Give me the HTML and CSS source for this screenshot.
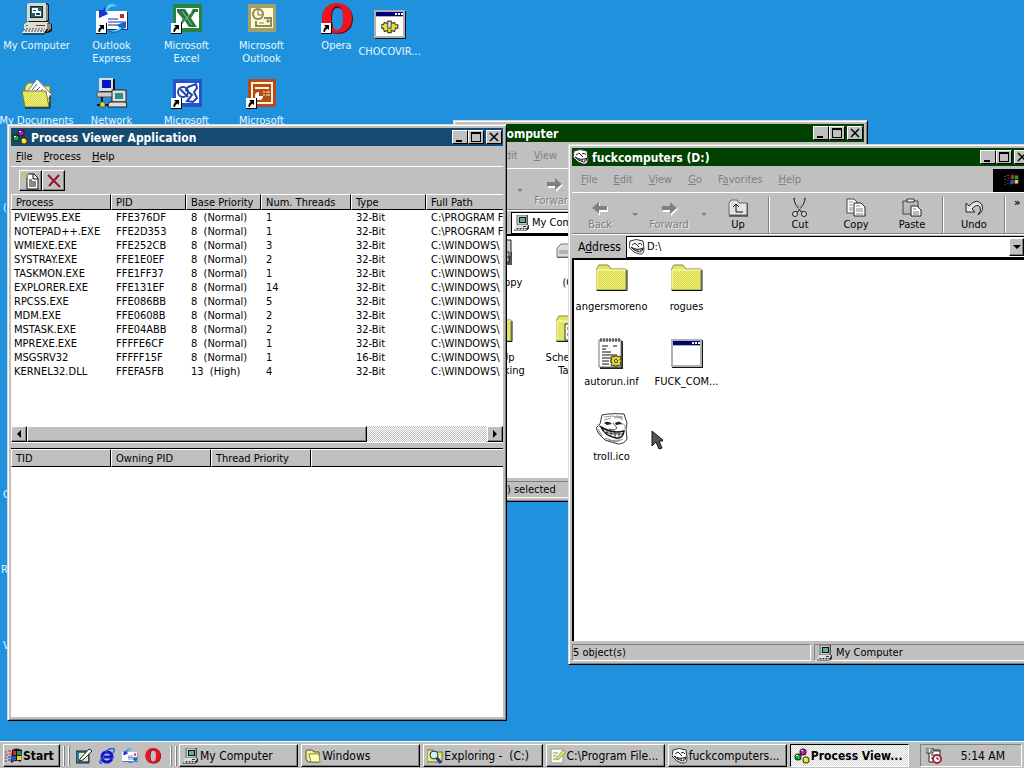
FILE: index.html
```html
<!DOCTYPE html>
<html lang="en">
<head>
<meta charset="utf-8">
<title>Desktop</title>
<link rel="stylesheet" href="styles.css">
</head>
<body>
<svg class="sprites" aria-hidden="true">
  <defs>
    <pattern id="dither-yellow" width="2" height="2" patternUnits="userSpaceOnUse"><rect width="2" height="2" fill="#d8dc48"/><path d="M0 0h1v1H0zM1 1h1v1H1z" fill="#eeee80"/></pattern>
    <symbol id="shortcut" viewBox="0 0 11 11"><path d="M0 0h11v11H0z" fill="#000"/><path d="M0 0h10v10H0z" fill="#fff"/><path d="M3 2h5v5L6.500 5.500Q4 6.500 4 9H2.500Q2 5.500 4.700 3.800z"/></symbol>
    <symbol id="pc" viewBox="0 0 32 32"><path d="M8 0h18l2 2v16l-2 2H8z" fill="#111"/><path d="M6 1l2-1h17v18H6z" fill="#dcd8cc"/><path d="M25 1l2 1v15l-2 1z" fill="#888"/><path d="M9 3h13v12H9z" fill="#222"/><path d="M10 4h11v10H10z" fill="#176a70"/><path d="M11 5h6v5h-6zM14 8h6v5h-6z" fill="#fff"/><path d="M15 10h4v2h-4zM12 7h3v1h-3z" fill="#174090"/><path d="M3 21l3-2h22l3 2v7l-4 2H3z" fill="#111"/><path d="M3 21l3-2h22l-2 2v5H3z" fill="#e0dcd0"/><path d="M26 21l4-1v6l-4 3z" fill="#888"/><path d="M15 22h9v1h-9z" fill="#444"/><path d="M5 22h2v1H5z" fill="#0a0"/><path d="M1 30l4-5h21l-3 5z" fill="#f0f0ea"/><path d="M2 31h21l4-5" fill="none" stroke="#111"/><path d="M5 26h19M4 28h19" fill="none" stroke="#333" stroke-dasharray="2 1"/></symbol>
    <symbol id="mini-pc" viewBox="0 0 16 16"><path d="M4 0h10v10H4z" fill="#333"/><path d="M3 0h10v10H3z" fill="#c8c8c8" stroke="#666"/><path d="M5 2h7v6H5z" fill="#111"/><path d="M6 3h5v4H6z" fill="#55aeb0"/><path d="M2 10h13v4H2z" fill="#333"/><path d="M2 10h12l-1 3H1z" fill="#ddd"/><path d="M9 11h3v1H9z" fill="#333"/><path d="M0 15h13l2-2" fill="none" stroke="#222"/><path d="M1 14h12" stroke="#fff" stroke-dasharray="2 1"/></symbol>
    <symbol id="outlook-express" viewBox="0 0 32 32"><path d="M1 9h31v18H1z" fill="#173060"/><path d="M0 8h31v18H0z" fill="#fff"/><path d="M24 11h4v4h-4z" fill="#d22020"/><path d="M12 16h10M12 19h16M12 22h13" stroke="#112a9a"/><path d="M20 3Q15-1 9 4L7 7H3v8l9-4-2-3q4-5 10-5z" fill="#1635d2"/><path d="M10 4q5-6 11-1l-6 1-6 5z" fill="#4ed2f2"/><path d="M11 28q8 5 15-2l4-1v-7l-9 4 3 3q-5 4-13 3z" fill="#1565c9"/><path d="M15 28q7-1 9-4l2 1q-5 5-11 3z" fill="#65e2f2"/></symbol>
    <symbol id="excel" viewBox="0 0 32 32"><path d="M2 1h29v28H2z" fill="#268440"/><path d="M5 5h23v20H5z" fill="#fff"/><path d="M6 6h8l4 6 4-6h5v3h-3l-4 6 6 9h-8l-4-6-4 4v3H6v-3h2l4-6-6-7z" fill="#267840"/><path d="M11 8l10 14M21 9L10 22" stroke="#91bf91"/></symbol>
    <symbol id="outlook" viewBox="0 0 32 32"><path d="M2 1h28v28H2z" fill="#a5a065"/><path d="M5 5h22v20H5z" fill="#fff9d5"/><circle cx="12" cy="11" r="5" fill="none" stroke="#8c8855" stroke-width="2"/><path d="M12 7v5h4" fill="none" stroke="#777247"/><path d="M10 18v5h15v-8h-7" fill="none" stroke="#8c8855" stroke-width="2"/><path d="M13 20h5M21 17h2v2h-2z" fill="#8c8855" stroke="#8c8855"/></symbol>
    <symbol id="opera" viewBox="0 0 32 32"><path d="M17 1C7 1 1 8 1 16s6 15 16 15 15-7 15-15S27 1 17 1m0 4q6 0 6 11t-6 12q-6 0-6-12t6-11" fill="#6b0713"/><path d="M16 0C6 0 1 7 1 15s5 15 15 15 15-7 15-15S26 0 16 0m0 3q6 0 6 12t-6 12q-6 0-6-12t6-12" fill="#ed1421"/></symbol>
    <symbol id="program" viewBox="0 0 32 32"><path d="M1 2h31v28H1z" fill="#111"/><path d="M0 1h31v28H0z" fill="#b0b0b0"/><path d="M2 8h27v19H2z" fill="#fff"/><path d="M2 3h27v4H2z" fill="#000078"/><path d="M21 4h2v2h-2zM24 4h2v2h-2zM27 4h2v2h-2z" fill="#fff"/></symbol>
    <symbol id="gear" viewBox="0 0 16 12"><path d="M6 1h3v2l3-1 1 2h2v3h-2l-1 3-3-1v2H6V9l-3 1-1-3H0V4h2l1-2 3 1z" fill="#e3df40" stroke="#45430b"/><path d="M6 1h3v6H6z" fill="#eee" stroke="#555"/></symbol>
    <symbol id="cog" viewBox="0 0 12 12"><path d="M5 0h2v2l3-1 1 1-1 3h2v2h-2l1 3-1 1-3-1v2H5v-2l-3 1-1-1 1-3H0V5h2L1 2l1-1 3 1z" fill="#dcdc30" stroke="#45430b"/><circle cx="6" cy="6" r="1.500" fill="#fff" stroke="#333"/></symbol>
    <symbol id="documents" viewBox="0 0 32 32"><path d="M4 9l3-4h7l2 3h13v17H4z" fill="#edec8b" stroke="#817b28"/><path d="M6 14L16 1l15 16-10 9z" fill="#fff" stroke="#777"/><path d="M11 12l5-6M13 15l6-6M16 17l6-6M20 19l5-6" stroke="#6650b0"/><path d="M1 13h24l3 16H4z" fill="url(#dither-yellow)" stroke="#7e7a2d"/><path d="M4 30h25V17" fill="none" stroke="#111"/></symbol>
    <symbol id="network" viewBox="0 0 32 32"><path d="M4 1h15v13H4z" fill="#111"/><path d="M3 0h14v13H3z" fill="#ddd"/><path d="M6 2h9v8H6z" fill="#0716c2"/><path d="M1 14h17v5H1z" fill="#ccc" stroke="#555"/><path d="M16 12h14v12H16z" fill="#ddd" stroke="#222"/><path d="M19 15h8v6h-8z" fill="#26908e"/><path d="M13 24h17l1 5H12z" fill="#ddd" stroke="#222"/><path d="M6 19v6M1 27h11" stroke="#111" stroke-width="2"/><path d="M4 24h5v5H4z" fill="#dcdc46" stroke="#555"/></symbol>
    <symbol id="frontpage" viewBox="0 0 32 32"><path d="M2 1h29v28H2z" fill="#2455cb"/><path d="M5 5h23v20H5z" fill="#fff"/><circle cx="12" cy="14" r="5" fill="#fff" stroke="#2044b0" stroke-width="2"/><path d="M9 11l8 8M17 9l8-3 1 4-3 4 3 6-4 4-6-1 5-6-6-5z" fill="none" stroke="#2044b0" stroke-width="2"/></symbol>
    <symbol id="powerpoint" viewBox="0 0 32 32"><path d="M2 1h28v28H2z" fill="#b54a20"/><path d="M6 5h20v20H6z" fill="#b54a20" stroke="#fff3c5" stroke-width="2"/><path d="M9 9h14v2H9z" fill="#fff3c5"/><path d="M13 14v4h4a4 4 0 1 1-4-4" fill="#fff"/><path d="M17 14h2M20 14h4M17 17h2M20 17h4" stroke="#fff3c5"/></symbol>
    <symbol id="folder" viewBox="0 0 32 32"><path d="M0 7l3-5h9l3 4h15v21H0z" fill="url(#dither-yellow)" stroke="#85843b"/><path d="M1 26V7h29" fill="none" stroke="#ffffc4"/><path d="M1 27.500h30V7" fill="none" stroke="#111"/></symbol>
    <symbol id="mini-folder" viewBox="0 0 16 16"><path d="M1 3l1-1h5l2 2h5v10H4L1 12z" fill="#efed95" stroke="#55532d"/><path d="M4 6h10l1 8H6z" fill="#ffffb5" stroke="#898641"/></symbol>
    <symbol id="inf" viewBox="0 0 32 32"><path d="M4 3h23v28H4z" fill="#222"/><path d="M3 2h22v27H3z" fill="#fff" stroke="#777"/><path d="M5 0v4M8 0v4M11 0v4M14 0v4M17 0v4M20 0v4M23 0v4" stroke="#111"/><path d="M6 8h6M17 8h4M6 11h4M6 14h9M6 17h15M6 20h16M6 23h7M6 26h7" stroke="#111"/></symbol>
    <symbol id="troll" viewBox="0 0 32 32"><path d="M6 2q8-2 22-1l3 9-1 6 1 10q-3 5-9 5L9 27 3 21l-3-6 4-4z" fill="#fff" stroke="#333"/><path d="M8 4l8-1 11 2M8 7l7-2M18 5q5-2 9 2M4 14l-3-3M25 11q5-1 4 5M20 3l7 1" fill="none" stroke="#999"/><path d="M8 10q4-3 8 1l-5 1zM19 10q5-3 7 1l-6 1z" fill="#222"/><path d="M17 10l4 5-3 2-5-1" fill="none" stroke="#555"/><path d="M5 14q11 7 23 4-1 8-8 7Q9 23 5 14z" fill="#fff" stroke="#111" stroke-width="1.500"/><path d="M8 19q9 3 19 2M11 17v5M15 18v6M19 19v6M23 18v6" fill="none" stroke="#333"/><path d="M9 25q7 4 15 2M20 29l7-3M2 16l4 7M12 27l8 2" fill="none" stroke="#888"/></symbol>
    <symbol id="mini-troll" viewBox="0 0 16 16"><path d="M1 2q6-3 13 0l1 8q0 6-5 5L5 13 0 8z" fill="#fff" stroke="#333"/><path d="M3 6l3-2 2 2M9 5q3-2 4 1M8 6l2 2" fill="none" stroke="#222"/><path d="M2 8q6 4 12 1-1 6-6 3-4-1-6-4z" fill="#eee" stroke="#222"/><path d="M6 10v2M9 10v3M12 10v2" stroke="#333"/></symbol>
    <symbol id="balls" viewBox="0 0 16 16"><circle cx="9" cy="4" r="3.500" fill="#241127"/><circle cx="9" cy="4" r="2.500" fill="#bf16bf"/><circle cx="4" cy="9" r="3.500" fill="#092c0b"/><circle cx="4" cy="9" r="2.500" fill="#18a92c"/><circle cx="12" cy="12" r="3.500" fill="#333008"/><circle cx="12" cy="12" r="2.500" fill="#ece629"/><path d="M7 2h2v1H7zM2 7h2v1H2zM10 10h2v1h-2z" fill="#fff"/></symbol>
    <symbol id="tasks" viewBox="0 0 32 32"><use href="#folder"/><path d="M9 10h19v16H9z" fill="#fff" stroke="#333"/><path d="M12 13h5v3h-5zM12 19h5v3h-5z" fill="none" stroke="#333"/></symbol>
    <symbol id="drive" viewBox="0 0 32 32"><path d="M1 9l4-4h23l3 3v11H1z" fill="#555"/><path d="M1 9l4-4h23l-3 4v9H1z" fill="#ddd" stroke="#777"/><path d="M3 12h19M3 14h19" stroke="#888"/></symbol>
    <symbol id="floppy" viewBox="0 0 32 32"><path d="M1 13h30v13H1z" fill="#555"/><path d="M2 13h26v10H2zM12 1h18v17H12z" fill="#ccc" stroke="#222"/><path d="M16 2h10v7H16zM4 18h18v2H4z" fill="#333"/></symbol>
    <symbol id="flag" viewBox="0 0 18 16"><path d="M7 2q4-3 10 0l-1 12q-5-3-10 1z" fill="#111"/><path d="M8 3q2-1 3 0v4H8z" fill="#df2828"/><path d="M12 3h4v4h-4z" fill="#1e9b42"/><path d="M7 9q2-2 4-1v4l-4 1z" fill="#265acb"/><path d="M12 8h4v4h-4z" fill="#e8d42b"/><path d="M0 4h2M3 3h3M0 7h3M4 6h2" stroke="#b62d2d"/><path d="M0 10h2M3 9h3M0 13h2M3 12h3" stroke="#233b9b"/></symbol>
    <symbol id="back" viewBox="0 0 20 20"><path d="M3 11l7-6v4h8v5h-8v4z" fill="#fff"/><path d="M2 10l7-6v4h8v4H9v4z" fill="#808080"/></symbol>
    <symbol id="forward" viewBox="0 0 20 20"><path d="M19 11l-7-6v4H4v5h8v4z" fill="#fff"/><path d="M18 10l-7-6v4H3v4h8v4z" fill="#808080"/></symbol>
    <symbol id="up" viewBox="0 0 20 20"><path d="M1 17V5l2-3h6l2 3h8v12z" fill="#e4e4e4" stroke="#666"/><path d="M1 18h19V5" fill="none" stroke="#111"/><path d="M5 9l3-3 3 3M8 6v8h7" fill="none" stroke="#111"/></symbol>
    <symbol id="cut" viewBox="0 0 20 20"><path d="M4 0l2 6 6 8M15 0l-2 6-6 8" fill="none" stroke="#333" stroke-width="2"/><path d="M5 1l2 6 5 6M14 1l-2 6-5 6" fill="none" stroke="#ddd"/><circle cx="5" cy="16" r="2.500" fill="#ddd" stroke="#222"/><circle cx="14" cy="16" r="2.500" fill="#ddd" stroke="#222"/></symbol>
    <symbol id="copy" viewBox="0 0 20 20"><path d="M1 1h7l3 3v11H1z" fill="#fff" stroke="#444"/><path d="M3 4h4M3 7h4M3 10h4M3 12h4" stroke="#888"/><path d="M8 5h7l4 4v9H8z" fill="#fff" stroke="#222"/><path d="M10 8h4M10 11h7M10 13h7M10 16h7" stroke="#888"/></symbol>
    <symbol id="paste" viewBox="0 0 20 20"><path d="M1 3h15v13H1z" fill="#bbb" stroke="#444"/><path d="M5 1h7v3H5z" fill="#eee" stroke="#333"/><path d="M9 8h6l4 4v6H9z" fill="#fff" stroke="#222"/><path d="M11 11h3M11 14h6M11 16h6" stroke="#777"/></symbol>
    <symbol id="undo" viewBox="0 0 20 20"><path d="M2 5v9h9l-3-3q5-6 8-2 2 3-2 8 6-4 4-10Q13-1 5 8z" fill="#e5e5e5" stroke="#222"/></symbol>
    <symbol id="write" viewBox="0 0 16 16"><path d="M0 3h13v12H0z" fill="#287e9e" stroke="#222"/><path d="M3 5h9v8H3z" fill="#eee5b0"/><path d="M4 11L13 1l3 2-9 9-4 1z" fill="#fff" stroke="#222"/></symbol>
    <symbol id="ie" viewBox="0 0 16 16"><path d="M13 11q-2 3-5 3-5 0-5-5t5-5q5 0 5 5H5" fill="none" stroke="#1515d0" stroke-width="3"/><path d="M3 10Q-1 16 3 15M6 4q6-5 9-3 1 1-1 4" fill="none" stroke="#2858e0" stroke-width="1.500"/></symbol>
    <symbol id="explore" viewBox="0 0 16 16"><path d="M0 2h6l2 2h7v10H0z" fill="#efec63" stroke="#666"/><path d="M9 9l5 6" stroke="#1537a6" stroke-width="3"/><circle cx="7" cy="7" r="4" fill="#c5f5fa" stroke="#235"/></symbol>
    <symbol id="note" viewBox="0 0 16 16"><path d="M1 1h12v14H1z" fill="#f4ffe4" stroke="#999"/><path d="M3 5h5M3 8h4M3 11h5" stroke="#75a35e"/><path d="M6 11l7-9 3 2-8 8z" fill="#e6e33b" stroke="#999"/></symbol>
    <symbol id="scheduler" viewBox="0 0 16 16"><path d="M3 2h11v12H3z" fill="#fff" stroke="#222"/><path d="M0 0h7v5H0z" fill="#fff" stroke="#222"/><path d="M2 1v3M5 1v3M5 7h4M5 10h3M8 3h6" stroke="#333"/><circle cx="11" cy="11" r="4" fill="#fff" stroke="#b71c3e" stroke-width="2"/><path d="M11 9v2h2" fill="none" stroke="#222"/></symbol>
    <symbol id="min" viewBox="0 0 10 10"><path d="M1 8h6v2H1z"/></symbol>
    <symbol id="max" viewBox="0 0 10 10"><path d="M0 0h10v10H0zM1 2v7h8V2z" fill-rule="evenodd"/></symbol>
    <symbol id="close" viewBox="0 0 10 10"><path d="M1 1l8 8M9 1L1 9" stroke="#000" stroke-width="1.500"/></symbol>
  </defs>
</svg>

<main class="desktop">
  <div class="desk-icons">
    <a class="item" href="#"><svg class="i32"><use href="#pc"/></svg><span>My Computer</span></a>
    <a class="item" href="#"><svg class="i32"><use href="#outlook-express"/><use href="#shortcut" y="20" width="11" height="11"/></svg><span>Outlook<br>Express</span></a>
    <a class="item" href="#"><svg class="i32"><use href="#excel"/><use href="#shortcut" y="20" width="11" height="11"/></svg><span>Microsoft<br>Excel</span></a>
    <a class="item" href="#"><svg class="i32"><use href="#outlook"/></svg><span>Microsoft<br>Outlook</span></a>
    <a class="item" href="#"><svg class="i32"><use href="#opera"/><use href="#shortcut" y="20" width="11" height="11"/></svg><span>Opera</span></a>
    <a class="item" href="#"><svg class="i32"><use href="#documents"/></svg><span>My Documents</span></a>
    <a class="item" href="#"><svg class="i32"><use href="#network"/></svg><span>Network</span></a>
    <a class="item" href="#"><svg class="i32"><use href="#frontpage"/><use href="#shortcut" y="20" width="11" height="11"/></svg><span>Microsoft</span></a>
    <a class="item" href="#"><svg class="i32"><use href="#powerpoint"/><use href="#shortcut" y="20" width="11" height="11"/></svg><span>Microsoft</span></a>
  </div>
  <a class="item loose" href="#"><svg class="i32"><use href="#program"/><use href="#gear" x="7" y="11" width="18" height="14"/></svg><span>CHOCOVIR...</span></a>
  <span class="peek peek-a">(</span><span class="peek peek-b">C</span><span class="peek peek-c">R</span><span class="peek peek-d">V</span>

  <section class="window computer">
    <header class="title"><svg class="i16"><use href="#mini-pc"/></svg><h2>My Computer</h2>
      <div class="controls"><button aria-label="Minimize"><svg><use href="#min"/></svg></button><button aria-label="Maximize"><svg><use href="#max"/></svg></button><button aria-label="Close"><svg><use href="#close"/></svg></button></div></header>
    <nav class="menu dim"><button><u>F</u>ile</button><button><u>E</u>dit</button><button><u>V</u>iew</button></nav>
    <div class="tools"><button class="tool dim"><svg class="i20"><use href="#back"/></svg>Back</button><i class="drop dim"></i><button class="tool dim"><svg class="i20"><use href="#forward"/></svg>Forward</button></div>
    <div class="address"><label for="addr-a">A<u>d</u>dress</label><div class="field"><svg class="i16"><use href="#mini-pc"/></svg><input id="addr-a" value="My Computer"></div></div>
    <div class="files">
      <a class="item" href="#"><svg class="i32"><use href="#floppy"/></svg><span>3½ Floppy</span></a>
      <a class="item" href="#"><svg class="i32"><use href="#drive"/></svg><span>(C:)</span></a>
      <a class="item" href="#"><svg class="i32"><use href="#folder"/></svg><span>Dial-Up<br>Networking</span></a>
      <a class="item" href="#"><svg class="i32"><use href="#tasks"/></svg><span>Scheduled<br>Tasks</span></a>
    </div>
    <footer class="status"><span>1 object(s) selected</span></footer>
  </section>

  <section class="window drive">
    <header class="title"><svg class="i16"><use href="#mini-troll"/></svg><h2>fuckcomputers (D:)</h2>
      <div class="controls"><button aria-label="Minimize"><svg><use href="#min"/></svg></button><button aria-label="Maximize"><svg><use href="#max"/></svg></button><button aria-label="Close"><svg><use href="#close"/></svg></button></div></header>
    <nav class="menu dim"><button><u>F</u>ile</button><button><u>E</u>dit</button><button><u>V</u>iew</button><button><u>G</u>o</button><button>F<u>a</u>vorites</button><button><u>H</u>elp</button><span class="brand"><svg class="i16"><use href="#flag"/></svg></span></nav>
    <div class="tools">
      <button class="tool dim"><svg class="i20"><use href="#back"/></svg>Back</button><i class="drop dim"></i>
      <button class="tool dim"><svg class="i20"><use href="#forward"/></svg>Forward</button><i class="drop dim"></i>
      <button class="tool"><svg class="i20"><use href="#up"/></svg>Up</button><i class="rule"></i>
      <button class="tool"><svg class="i20"><use href="#cut"/></svg>Cut</button>
      <button class="tool"><svg class="i20"><use href="#copy"/></svg>Copy</button>
      <button class="tool"><svg class="i20"><use href="#paste"/></svg>Paste</button><i class="rule"></i>
      <button class="tool"><svg class="i20"><use href="#undo"/></svg>Undo</button><i class="rule"></i>
      <button class="more">»</button>
    </div>
    <div class="address"><label for="addr-b">A<u>d</u>dress</label><div class="field"><svg class="i16"><use href="#mini-troll"/></svg><input id="addr-b" value="D:\"><button class="bevel" aria-label="Show addresses"><i class="tri down"></i></button></div></div>
    <div class="files">
      <a class="item" href="#"><svg class="i32"><use href="#folder"/></svg><span>angersmoreno</span></a>
      <a class="item" href="#"><svg class="i32"><use href="#folder"/></svg><span>rogues</span></a>
      <a class="item" href="#"><svg class="i32"><use href="#inf"/><use href="#cog" x="14" y="17" width="12" height="12"/></svg><span>autorun.inf</span></a>
      <a class="item" href="#"><svg class="i32"><use href="#program"/></svg><span>FUCK_COM...</span></a>
      <a class="item" href="#"><svg class="i32"><use href="#troll"/></svg><span>troll.ico</span></a>
    </div>
    <footer class="status"><span>5 object(s)</span><span><svg class="i16"><use href="#mini-pc"/></svg>My Computer</span></footer>
  </section>

  <section class="window viewer">
    <header class="title"><svg class="i16"><use href="#balls"/></svg><h1>Process Viewer Application</h1>
      <div class="controls"><button aria-label="Minimize"><svg><use href="#min"/></svg></button><button aria-label="Maximize"><svg><use href="#max"/></svg></button><button aria-label="Close"><svg><use href="#close"/></svg></button></div></header>
    <nav class="menu"><button><u>F</u>ile</button><button><u>P</u>rocess</button><button><u>H</u>elp</button></nav>
    <div class="actions">
      <button class="bevel" aria-label="New"><svg class="i18" viewBox="0 0 18 18"><path d="M5 2h7l4 4v11H5z" fill="#fff" stroke="#111"/><path d="M11 2v5h5M7 8h3M7 10h7M7 12h7M7 14h7" fill="none" stroke="#111"/><path d="M3 0v7M0 3h7M1 1l5 5M6 1L1 6" stroke="#c5c45a"/></svg></button>
      <button class="bevel" aria-label="Kill"><svg class="i18" viewBox="0 0 18 18"><path d="M3 3l12 12M14 3L4 14" fill="none" stroke="#971533" stroke-width="2"/></svg></button>
    </div>
    <div class="pane">
      <table class="grid">
        <colgroup><col class="w100"><col class="w75"><col class="w75"><col class="w90"><col class="w75"><col></colgroup>
        <thead><tr><th>Process</th><th>PID</th><th>Base Priority</th><th>Num. Threads</th><th>Type</th><th>Full Path</th></tr></thead>
        <tbody>
          <tr><td>PVIEW95.EXE</td><td>FFE376DF</td><td>8&nbsp; (Normal)</td><td>1</td><td>32-Bit</td><td>C:\PROGRAM F</td></tr>
          <tr><td>NOTEPAD++.EXE</td><td>FFE2D353</td><td>8&nbsp; (Normal)</td><td>1</td><td>32-Bit</td><td>C:\PROGRAM F</td></tr>
          <tr><td>WMIEXE.EXE</td><td>FFE252CB</td><td>8&nbsp; (Normal)</td><td>3</td><td>32-Bit</td><td>C:\WINDOWS\</td></tr>
          <tr><td>SYSTRAY.EXE</td><td>FFE1E0EF</td><td>8&nbsp; (Normal)</td><td>2</td><td>32-Bit</td><td>C:\WINDOWS\</td></tr>
          <tr><td>TASKMON.EXE</td><td>FFE1FF37</td><td>8&nbsp; (Normal)</td><td>1</td><td>32-Bit</td><td>C:\WINDOWS\</td></tr>
          <tr><td>EXPLORER.EXE</td><td>FFE131EF</td><td>8&nbsp; (Normal)</td><td>14</td><td>32-Bit</td><td>C:\WINDOWS\</td></tr>
          <tr><td>RPCSS.EXE</td><td>FFE086BB</td><td>8&nbsp; (Normal)</td><td>5</td><td>32-Bit</td><td>C:\WINDOWS\</td></tr>
          <tr><td>MDM.EXE</td><td>FFE0608B</td><td>8&nbsp; (Normal)</td><td>2</td><td>32-Bit</td><td>C:\WINDOWS\</td></tr>
          <tr><td>MSTASK.EXE</td><td>FFE04ABB</td><td>8&nbsp; (Normal)</td><td>2</td><td>32-Bit</td><td>C:\WINDOWS\</td></tr>
          <tr><td>MPREXE.EXE</td><td>FFFFE6CF</td><td>8&nbsp; (Normal)</td><td>1</td><td>32-Bit</td><td>C:\WINDOWS\</td></tr>
          <tr><td>MSGSRV32</td><td>FFFFF15F</td><td>8&nbsp; (Normal)</td><td>1</td><td>16-Bit</td><td>C:\WINDOWS\</td></tr>
          <tr><td>KERNEL32.DLL</td><td>FFEFA5FB</td><td>13&nbsp; (High)</td><td>4</td><td>32-Bit</td><td>C:\WINDOWS\</td></tr>
        </tbody>
      </table>
    </div>
    <div class="scroll"><button class="bevel" aria-label="Scroll left"><i class="tri left"></i></button><span class="thumb bevel"></span><span class="track"></span><button class="bevel" aria-label="Scroll right"><i class="tri right"></i></button></div>
    <div class="splitter"></div>
    <div class="threads">
      <table class="grid">
        <colgroup><col class="w100"><col class="w100"><col class="w100"><col></colgroup>
        <thead><tr><th>TID</th><th>Owning PID</th><th>Thread Priority</th><th></th></tr></thead>
      </table>
    </div>
  </section>

  <svg class="pointer" viewBox="0 0 12 20"><path d="M1 1v15l4-4 3 7 3-1-3-7h5z" fill="#555" stroke="#111"/></svg>
</main>

<footer class="taskbar">
  <button class="start bevel"><svg class="i18"><use href="#flag"/></svg>Start</button>
  <i class="grip"></i>
  <div class="quick">
    <a href="#" aria-label="Show Desktop"><svg class="i16"><use href="#write"/></svg></a>
    <a href="#" aria-label="Internet Explorer"><svg class="i16"><use href="#ie"/></svg></a>
    <a href="#" aria-label="Outlook Express"><svg class="i16"><use href="#outlook-express"/></svg></a>
    <a href="#" aria-label="Opera"><svg class="i16"><use href="#opera"/></svg></a>
  </div>
  <i class="grip"></i>
  <div class="tasks">
    <button class="bevel"><svg class="i16"><use href="#mini-pc"/></svg>My Computer</button>
    <button class="bevel"><svg class="i16"><use href="#mini-folder"/></svg>Windows</button>
    <button class="bevel"><svg class="i16"><use href="#explore"/></svg>Exploring -&nbsp; (C:)</button>
    <button class="bevel"><svg class="i16"><use href="#note"/></svg>C:\Program File...</button>
    <button class="bevel"><svg class="i16"><use href="#mini-troll"/></svg>fuckcomputers...</button>
    <button class="active"><svg class="i16"><use href="#balls"/></svg>Process View...</button>
  </div>
  <div class="tray"><svg class="i16"><use href="#scheduler"/></svg><time>5:14 AM</time></div>
</footer>
</body>
</html>
```
FILE: styles.css
```css
:root {
  --face: #c0c0c0;
  --shade: #808080;
  --sky: #2092dd;
}
* { box-sizing: border-box; }
body {
  margin: 0;
  height: 100vh;
  display: flex;
  flex-direction: column;
  overflow: hidden;
  background: var(--sky);
  color: #000;
  font: 11px/14px "DejaVu Sans Condensed", "Noto Sans", sans-serif;
}
button, input { font: inherit; color: inherit; }
button { margin: 0; padding: 0; border: 0; background: none; white-space: nowrap; }
a { color: inherit; text-decoration: none; }
svg { display: block; flex: none; }
.sprites { position: absolute; width: 0; height: 0; }
.i16 { width: 16px; height: 16px; }
.i18 { width: 18px; height: 18px; }
.i20 { width: 20px; height: 20px; }
.i32 { width: 32px; height: 32px; }

.bevel {
  background: var(--face);
  border: 1px solid;
  border-color: #fff #000 #000 #fff;
  box-shadow: inset -1px -1px var(--shade);
}
.tri { display: block; width: 0; height: 0; border: 4px solid transparent; }
.tri.left { border-left: 0; border-right-color: #000; }
.tri.right { border-right: 0; border-left-color: #000; }
.tri.down { border-bottom: 0; border-top-color: #000; }

.desktop { position: relative; flex: 1; min-height: 0; overflow: hidden; }
.desk-icons {
  display: grid;
  grid-template-columns: repeat(5, 75px);
  grid-auto-rows: 75px;
  margin-left: -1px;
  padding-top: 3px;
  color: #e4f8ff;
}
.item {
  display: flex;
  flex-direction: column;
  align-items: center;
  gap: 4px;
  width: 75px;
  line-height: 13px;
  text-align: center;
  white-space: nowrap;
}
.loose { position: absolute; left: 352px; top: 9px; color: #e4f8ff; }
.peek { position: absolute; color: #e4f8ff; }
.peek-a { left: 3px; top: 201px; }
.peek-b { left: 3px; top: 488px; }
.peek-c { left: 1px; top: 563px; }
.peek-d { left: 3px; top: 639px; }

.window {
  position: absolute;
  display: flex;
  flex-direction: column;
  padding: 3px;
  background: var(--face);
  border: 1px solid;
  border-color: #d8d8d8 #000 #000 #d8d8d8;
  box-shadow: inset 1px 1px #fff, inset -1px -1px var(--shade);
}
.computer { left: 453px; top: 120px; width: 415px; height: 382px; }
.drive { left: 568px; top: 144px; width: 467px; height: 521px; }
.viewer { left: 7px; top: 124px; width: 500px; height: 597px; }

.title {
  display: flex;
  align-items: center;
  gap: 3px;
  height: 18px;
  padding: 0 1px;
  background: #004000;
  color: #fff;
}
.viewer .title { background: #164a70; }
.title h1, .title h2 { flex: 1; margin: 0; padding-top: 1px; font-size: 12px; font-weight: bold; white-space: nowrap; }
.controls { display: flex; }
.controls button {
  display: grid;
  place-items: center;
  width: 16px;
  height: 14px;
  background: var(--face);
  border: 1px solid;
  border-color: #fff #000 #000 #fff;
}
.controls button:last-child { margin-left: 2px; }
.controls svg { width: 10px; height: 10px; }

.menu { display: flex; align-items: center; height: 26px; padding: 2px 0 0 9px; gap: 16px; }
.dim { color: var(--shade); text-shadow: 1px 1px #e8e8e8; }
.viewer .menu { height: 20px; padding: 2px 0 0 5px; gap: 11px; }
.brand { display: grid; place-items: center; width: 38px; height: 23px; margin-left: auto; background: #000; }

.tools {
  display: flex;
  align-items: center;
  height: 42px;
  padding-top: 3px;
  border-top: 1px solid #fff;
  border-bottom: 1px solid var(--shade);
  overflow: hidden;
}
.tool { display: flex; flex: none; flex-direction: column; align-items: center; width: 56px; }
.drop { flex: none; width: 13px; height: 8px; padding: 2px 4px; }
.drop::before { content: ""; display: block; border: 3px solid transparent; border-top-color: var(--shade); border-bottom: 0; }
.rule { flex: none; width: 2px; height: 36px; margin: 0 2px; border-left: 1px solid var(--shade); border-right: 1px solid #fff; }
.more { align-self: flex-start; padding-left: 6px; font-weight: bold; }

.address { display: flex; align-items: center; height: 24px; padding-left: 6px; border-top: 1px solid #fff; font-size: 12px; }
.address label { width: 48px; white-space: nowrap; }
.field {
  display: flex;
  align-items: center;
  flex: 1;
  height: 22px;
  padding-left: 2px;
  background: #fff;
  border: 1px solid #000;
  font-size: 11px;
}
.field input { flex: 1; min-width: 0; padding: 1px 2px 0; border: 0; background: none; outline: 0; }
.field button { display: grid; place-items: center; width: 15px; height: 18px; margin-right: 6px; }

.files {
  flex: 1;
  display: grid;
  grid-template-columns: repeat(2, 75px);
  grid-auto-rows: 75px;
  padding-top: 3px;
  background: #fff;
  border-top: 2px solid #000;
  border-left: 2px solid #000;
}
.status { display: flex; gap: 3px; height: 20px; padding-top: 3px; }
.status span {
  display: flex;
  flex: 1;
  align-items: center;
  gap: 3px;
  padding-top: 1px;
  border: 1px solid;
  border-color: var(--shade) #fff #fff var(--shade);
  white-space: nowrap;
}
.status span + span { flex: 0 0 217px; padding-left: 2px; }

.files .item { gap: 5px; }

.actions { display: flex; align-items: center; height: 28px; padding-left: 8px; border-top: 1px solid #fff; }
.actions button { display: grid; place-items: center; width: 23px; height: 21px; }
.pane { height: 232px; overflow: hidden; background: #fff; }
.threads { flex: 1; overflow: hidden; background: #fff; border-top: 1px solid #000; }
.grid { width: 100%; table-layout: fixed; border-collapse: separate; border-spacing: 0; line-height: 12px; }
.w75 { width: 75px; }
.w90 { width: 90px; }
.w100 { width: 100px; }
.grid th {
  height: 16px;
  padding: 2px 0 0 4px;
  background: var(--face);
  border: 1px solid;
  border-color: #fff #000 #000 #fff;
  font-weight: normal;
  text-align: left;
  white-space: nowrap;
}
.grid th:last-child { border-right: 0; }
.grid td { height: 14px; padding: 2px 0 0 5px; white-space: nowrap; }
.grid td:first-child { padding-left: 3px; }
.threads th { height: 18px; }
.scroll { display: grid; grid-template-columns: 16px 340px 1fr 16px; height: 16px; }
.scroll button { display: grid; place-items: center; }
.track { background: repeating-conic-gradient(#fff 0 25%, #c0c0c0 0 50%) 0 0 / 2px 2px; }
.splitter { height: 6px; border-top: 1px solid #fff; }

.pointer { position: absolute; left: 651px; top: 430px; width: 12px; height: 20px; }

.taskbar {
  display: flex;
  align-items: center;
  gap: 3px;
  height: 27px;
  padding: 1px 2px 0 3px;
  background: var(--face);
  border-top: 1px solid #fff;
  font-size: 12px;
}
.start { display: flex; align-items: center; width: 57px; height: 23px; padding-left: 1px; font-weight: bold; }
.grip { width: 6px; height: 20px; border: solid #fff; border-width: 0 1px; box-shadow: 1px 0 var(--shade), inset 1px 0 var(--shade); }
.quick { display: flex; gap: 7px; padding: 0 6px 0 4px; }
.tasks { display: flex; flex: 1; gap: 3px; min-width: 0; }
.tasks button { display: flex; flex: 1; align-items: center; gap: 1px; min-width: 0; height: 23px; padding-left: 3px; overflow: hidden; }
.tasks .active {
  border: 1px solid;
  border-color: #000 #fff #fff #000;
  background: repeating-conic-gradient(#fff 0 25%, #d4d4d4 0 50%) 0 0 / 2px 2px;
  font-weight: bold;
}
.tray {
  display: flex;
  align-items: center;
  justify-content: space-between;
  width: 102px;
  height: 23px;
  margin-left: 8px;
  padding: 0 16px 0 5px;
  border: 1px solid;
  border-color: var(--shade) #fff #fff var(--shade);
}
```
